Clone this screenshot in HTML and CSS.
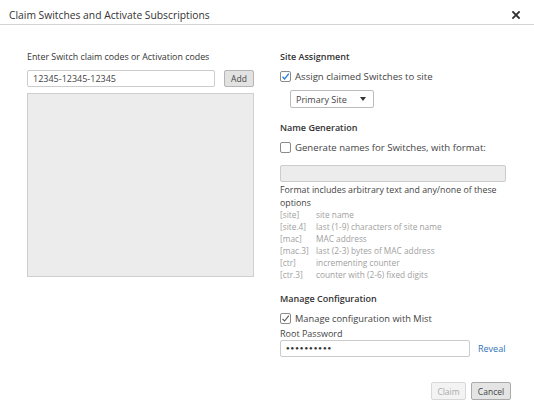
FILE: index.html
```html
<!DOCTYPE html>
<html lang="en">
<head>
    <meta charset="UTF-8">
    <title>Claim Switches and Activate Subscriptions</title>
    <link rel="stylesheet" href="styles.css">
</head>
<body>
    <div class="dialog">
        <div class="dialog-header">
            <span class="dialog-title">Claim Switches and Activate Subscriptions</span>
            <span class="close">
                <svg width="8" height="8" viewBox="0 0 8 8"><path d="M1 1 L7 7 M7 1 L1 7" stroke="#333" stroke-width="1.8" stroke-linecap="square"/></svg>
            </span>
        </div>
        <div class="dialog-body">
            <div class="col-left">
                <div class="label">Enter Switch claim codes or Activation codes</div>
                <div class="code-row">
                    <input class="text-input code-input" type="text" value="12345-12345-12345">
                    <button class="btn btn-add">Add</button>
                </div>
                <div class="code-list"></div>
            </div>
            <div class="col-right">
                <div class="section-title">Site Assignment</div>
                <label class="check-row">
                    <span class="checkbox">
                        <svg width="9" height="9" viewBox="0 0 9 9"><path d="M1.5 4.8 L3.6 7 L7.8 1.6" stroke="#2a7fd4" stroke-width="1.3" fill="none"/></svg>
                    </span>
                    Assign claimed Switches to site
                </label>
                <div class="select">
                    <span>Primary Site</span>
                    <span class="caret"></span>
                </div>

                <div class="section-title name-title">Name Generation</div>
                <label class="check-row">
                    <span class="checkbox"></span>
                    Generate names for Switches, with format:
                </label>
                <div class="text-input format-input"></div>
                <div class="help">Format includes arbitrary text and any/none of these options</div>
                <div class="options">
                    <span>[site]</span><span>site name</span>
                    <span>[site.4]</span><span>last (1-9) characters of site name</span>
                    <span>[mac]</span><span>MAC address</span>
                    <span>[mac.3]</span><span>last (2-3) bytes of MAC address</span>
                    <span>[ctr]</span><span>incrementing counter</span>
                    <span>[ctr.3]</span><span>counter with (2-6) fixed digits</span>
                </div>

                <div class="section-title config-title">Manage Configuration</div>
                <label class="check-row small">
                    <span class="checkbox">
                        <svg width="9" height="9" viewBox="0 0 9 9"><path d="M1.5 4.8 L3.6 7 L7.8 1.6" stroke="#555" stroke-width="1.1" fill="none"/></svg>
                    </span>
                    Manage configuration with Mist
                </label>
                <div class="field-label">Root Password</div>
                <div class="password-row">
                    <div class="text-input password-input">&#9679;&#9679;&#9679;&#9679;&#9679;&#9679;&#9679;&#9679;&#9679;&#9679;</div>
                    <a class="reveal">Reveal</a>
                </div>
            </div>
        </div>
        <div class="dialog-footer">
            <button class="btn btn-claim" disabled>Claim</button>
            <button class="btn btn-cancel">Cancel</button>
        </div>
    </div>
</body>
</html>
```

FILE: styles.css
```css
body { margin: 0; padding: 0; background: #fff; font-family: "Open Sans", "Noto Sans", sans-serif; color: #333; }
.dialog { width: 534px; height: 416px; background: #fff; }
.dialog-header { height: 24px; border-bottom: 1px solid #d4d4d4; display: flex; align-items: center; justify-content: space-between; padding: 0 14px 0 9px; }
.dialog-title { font-size: 10.3px; color: #333; padding-top: 6px; }
.close { display: flex; padding-top: 6px; }

.dialog-body { display: grid; grid-template-columns: 227px 230px; column-gap: 26px; padding: 25px 0 0 27px; }
.label { font-size: 8.85px; line-height: 14px; color: #333; }
.code-row { display: flex; gap: 9px; margin-top: 6px; }
.text-input { box-sizing: border-box; height: 17px; border: 1px solid #ccc; border-radius: 2px; background: #fff; font-family: inherit; font-size: 9px; color: #444; padding: 0 5px; outline: none; }
.code-input { width: 188px; }
.code-list { margin-top: 6px; height: 184px; background: #ececec; border: 1px solid #cfcfcf; box-sizing: border-box; }

.btn { box-sizing: border-box; height: 18px; border-radius: 2px; font-family: inherit; font-size: 8.5px; padding: 0; cursor: pointer; }
.btn-add { width: 30px; height: 17px; background: #e2e2e2; border: 1px solid #b5b5b5; color: #444; }

.section-title { font-size: 9px; line-height: 14px; color: #333; font-weight: 600; }
.check-row { display: flex; align-items: center; height: 14px; margin-top: 5px; font-size: 9.6px; color: #444; }
.check-row.small { font-size: 9.3px; }
.checkbox { box-sizing: border-box; width: 11px; height: 11px; border: 1px solid #8a8a8a; border-radius: 2px; margin-right: 4px; display: flex; align-items: center; justify-content: center; }
.select { box-sizing: border-box; width: 84px; height: 18px; margin: 7px 0 0 10px; border: 1px solid #bbb; border-radius: 2px; display: flex; align-items: center; justify-content: space-between; padding: 0 7px 0 5px; font-size: 9px; color: #444; }
.caret { width: 0; height: 0; border-left: 3px solid transparent; border-right: 3px solid transparent; border-top: 4px solid #333; }

.name-title { margin-top: 13px; }
.format-input { width: 226px; margin-top: 11px; background: #ececec; border-color: #ccc; }
.help { font-size: 8.8px; line-height: 12.5px; color: #444; margin-top: 2px; }
.options { display: grid; grid-template-columns: 36px auto; font-size: 8.3px; line-height: 12px; color: #a0a0a0; }

.config-title { margin-top: 11px; }
.field-label { font-size: 9px; line-height: 12px; margin-top: 3px; color: #444; }
.password-row { display: flex; align-items: center; gap: 8px; }
.password-input { width: 190px; font-size: 6px; line-height: 15px; letter-spacing: 1px; color: #333; }
.reveal { font-size: 9px; color: #2f73b8; }

.dialog-footer { display: flex; justify-content: flex-end; gap: 5px; padding: 25px 23px 0 0; }
.btn-claim { width: 35px; background: #f3f3f3; border: 1px solid #d8d8d8; color: #aaa; }
.btn-cancel { width: 40px; background: #e4e4e4; border: 1px solid #ababab; color: #444; }
```
